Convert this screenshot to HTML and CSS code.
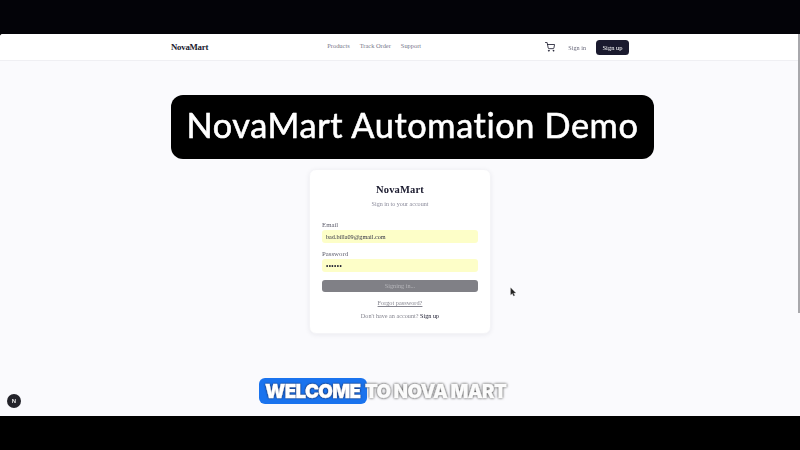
FILE: index.html
```html
<!DOCTYPE html>
<html lang="en">
<head>
<meta charset="utf-8">
<title>NovaMart</title>
<link rel="stylesheet" href="styles.css">
</head>
<body>
<div class="letterbox"></div>
<div class="screen">
  <header class="topbar">
    <div class="topbar-inner">
      <a class="logo">NovaMart</a>
      <nav class="nav">
        <a>Products</a>
        <a>Track Order</a>
        <a>Support</a>
      </nav>
      <div class="actions">
        <svg class="cart" viewBox="0 0 24 24" fill="none" stroke="#1a1a2e" stroke-width="2" stroke-linecap="round" stroke-linejoin="round">
          <circle cx="9" cy="21" r="1"/><circle cx="20" cy="21" r="1"/>
          <path d="M1 1h4l2.7 13.4a2 2 0 0 0 2 1.6h9.7a2 2 0 0 0 2-1.6L23 6H6"/>
        </svg>
        <a class="signin">Sign in</a>
        <a class="signup">Sign up</a>
      </div>
    </div>
  </header>
  <main class="main">
    <section class="card">
      <h1 class="card-title">NovaMart</h1>
      <p class="card-sub">Sign in to your account</p>
      <form class="form">
        <div class="field">
          <span class="label">Email</span>
          <div class="input">bad.billa09@gmail.com</div>
        </div>
        <div class="field">
          <span class="label">Password</span>
          <div class="input dots">••••••</div>
        </div>
        <div class="submit">Signing in...</div>
      </form>
      <a class="forgot">Forgot password?</a>
      <p class="switch">Don't have an account? <a>Sign up</a></p>
    </section>
  </main>
  <div class="demo-title">NovaMart Automation Demo</div>
  <div class="caption"><span class="hl">WELCOME</span><span class="rest">TO NOVA MART</span></div>
  <div class="next-badge">N</div>
  <svg class="pointer" viewBox="0 0 10 14"><path d="M1 1v10l2.5-2 1.6 3.6 1.6-.7L5 8.400h3.200z" fill="#222" stroke="#777" stroke-width=".5"/></svg>
  <div class="scroll-thumb"></div>
</div>
<div class="letterbox letterbox-bottom"></div>
</body>
</html>
```
FILE: styles.css
```css
* { box-sizing: border-box; }
html, body { margin: 0; height: 100%; overflow: hidden; }
body {
  background: #000;
  display: flex;
  flex-direction: column;
  font-family: "Liberation Serif", serif;
  color: #1a1a2e;
}
.letterbox { height: 34px; flex: none; background: #030308; }
.letterbox-bottom { background: #000; }
.screen {
  position: relative;
  height: 382px;
  flex: none;
  background: #fafafd;
  display: flex;
  flex-direction: column;
  border-top-left-radius: 3px;
  overflow: hidden;
  filter: blur(.45px);
}
.topbar {
  height: 27px;
  flex: none;
  background: #fff;
  border-bottom: 1px solid #efeff3;
  display: flex;
  justify-content: center;
}
.topbar-inner {
  width: 458px;
  display: flex;
  align-items: center;
  justify-content: space-between;
}
.logo { font-size: 8.800px; font-weight: 700; letter-spacing: -.25px; color: #1a1a2e; }
.nav { display: flex; gap: 10px; margin-top: -3px; margin-left: -5px; }
.nav a { font-size: 6.400px; color: #77778a; }
.actions { display: flex; align-items: center; }
.cart { width: 10px; height: 10px; margin-right: 13px; margin-top: -1px; }
.signin { font-size: 6.200px; color: #6b6b7d; margin-right: 10px; margin-top: 1px; }
.signup {
  width: 33px;
  height: 15px;
  border-radius: 3.500px;
  background: #1a1a2e;
  color: #fff;
  font-size: 6.500px;
  display: flex;
  align-items: center;
  justify-content: center;
}
.main {
  flex: 1;
  display: flex;
  justify-content: center;
  align-items: flex-start;
  padding-top: 108px;
}
.card {
  width: 182px;
  height: 165px;
  background: #fff;
  border-radius: 7px;
  border: 1px solid #f4f4f7;
  box-shadow: 0 1px 5px rgba(30, 30, 60, .07);
  padding: 14px 12px 0;
  display: flex;
  flex-direction: column;
  align-items: center;
}
.card-title {
  margin: 0;
  font-size: 10.500px;
  line-height: 12px;
  font-weight: 700;
  letter-spacing: .15px;
}
.card-sub {
  margin: 4px 0 0;
  font-size: 6.100px;
  line-height: 8px;
  color: #8a8a9a;
}
.form { width: 156px; margin-top: 13px; display: flex; flex-direction: column; }
.field { display: flex; flex-direction: column; margin-bottom: 7px; }
.label {
  font-size: 6.800px;
  line-height: 8px;
  color: #5f5f6e;
}
.input {
  height: 13px;
  border-radius: 3px;
  background: #fdfec8;
  margin-top: 1px;
  padding-left: 4px;
  font-size: 6.200px;
  line-height: 13px;
  color: #333344;
}
.dots { font-family: "Liberation Sans", sans-serif; letter-spacing: .4px; color: #1a1a2e; font-size: 6.500px; }
.submit {
  height: 12px;
  margin-top: 1px;
  border-radius: 3px;
  background: #808086;
  color: #b5b5ba;
  font-size: 6.200px;
  line-height: 12px;
  text-align: center;
}
.forgot {
  margin-top: 7px;
  font-size: 6.300px;
  line-height: 8px;
  color: #85858f;
  text-decoration: underline;
}
.switch {
  margin: 5px 0 0;
  font-size: 6.200px;
  line-height: 8px;
  color: #85858f;
}
.switch a { color: #1a1a2e; }
.demo-title {
  position: absolute;
  left: 171px;
  top: 61px;
  width: 483px;
  height: 64px;
  background: #000;
  border-radius: 12px;
  color: #fff;
  font-family: Lato, sans-serif;
  font-size: 34.300px;
  font-weight: 400;
  -webkit-text-stroke: .6px #fff;
  line-height: 60px;
  text-align: center;
  letter-spacing: .6px;
  white-space: nowrap;
}
.caption {
  position: absolute;
  left: 259px;
  top: 344px;
  height: 26px;
  display: flex;
  align-items: center;
  font-family: Inter, sans-serif;
  font-weight: 900;
  font-size: 18.800px;
  letter-spacing: -.65px;
  color: #fff;
  -webkit-text-stroke: .3px #fff;
  white-space: nowrap;
}
.hl {
  width: 108px;
  height: 26px;
  background: #1a73ee;
  border-radius: 6px;
  padding-left: 6px;
  line-height: 27px;
  text-shadow: 0 0 2px #1c2a55, 0 0 2px #1c2a55;
}
.rest { color: #fbfbfb; text-shadow: 0 0 2px #444, 0 0 3px #555; margin-left: -2px; }
.next-badge {
  position: absolute;
  left: 7px;
  top: 360px;
  width: 14px;
  height: 14px;
  border-radius: 50%;
  background: #23232a;
  color: #e8e8e8;
  font-family: "Liberation Sans", sans-serif;
  font-size: 6px;
  font-weight: 700;
  line-height: 14px;
  text-align: center;
}
.pointer { position: absolute; left: 510px; top: 253px; width: 7px; height: 10px; }
.scroll-thumb {
  position: absolute;
  right: 0;
  top: 0;
  width: 2px;
  height: 279px;
  background: #a8a8ac;
}
```
